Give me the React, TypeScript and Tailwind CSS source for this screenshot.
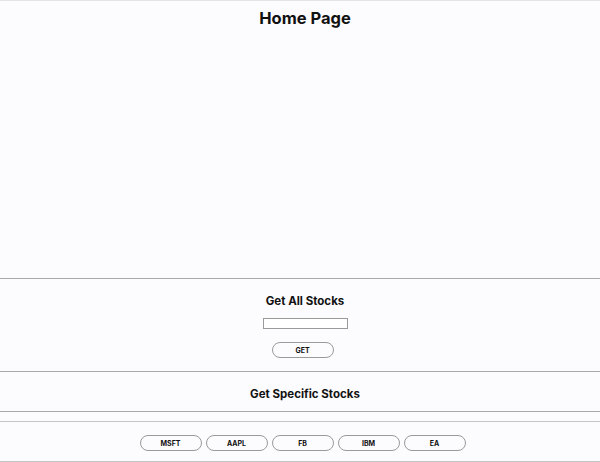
const stocks = ["MSFT", "AAPL", "FB", "IBM", "EA"];

export default function App() {
  return (
    <div className="min-h-screen bg-[#fcfbfd] text-[#111] font-['Inter',sans-serif]">
      <header className="h-[278px] border-t border-[#e6e4e8] pl-[10px]">
        <h1 className="pt-[7px] text-center text-[16.5px] font-bold leading-[20px]">Home Page</h1>
      </header>

      <section className="h-[94px] border-y border-[#a9a9a9] flex flex-col items-center pl-[10px]">
        <h2 className="mt-[15px] text-[11.5px] font-bold leading-[14px]">Get All Stocks</h2>
        <input className="mt-[10px] w-[85px] h-[11px] border border-[#9a9a9a] bg-white outline-none" />
        <button className="mt-[13px] -ml-[5px] w-[62px] h-[16px] rounded-full border border-[#9a9a9a] text-[7px] font-bold leading-none">
          GET
        </button>
      </section>

      <section className="h-[40px] border-b border-[#a9a9a9] flex justify-center pl-[10px]">
        <h2 className="mt-[15px] text-[11.5px] font-bold leading-[14px]">Get Specific Stocks</h2>
      </section>

      <div className="mt-[9px] h-[41px] border-y border-[#c4c4c4] flex justify-center items-start gap-[4px] pt-[13px] pl-[5px]">
        {stocks.map((s) => (
          <button
            key={s}
            className="w-[62px] h-[16px] rounded-full border border-[#9a9a9a] text-[7px] font-bold leading-none"
          >
            {s}
          </button>
        ))}
      </div>
    </div>
  );
}
